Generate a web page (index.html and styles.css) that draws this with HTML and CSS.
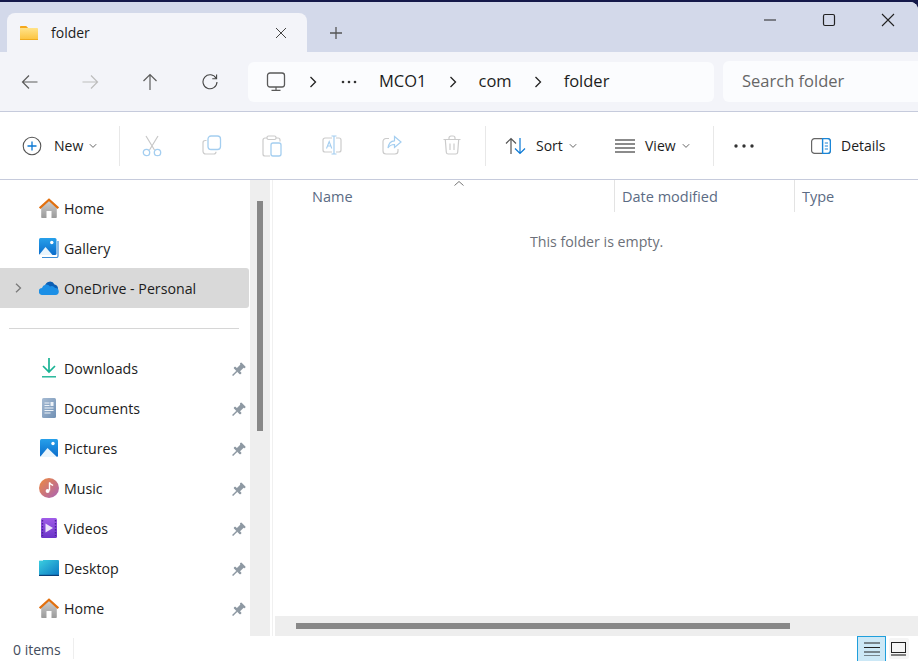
FILE: index.html
```html
<!DOCTYPE html>
<html lang="en">
<head>
  <meta charset="UTF-8" />
  <title>folder - File Explorer</title>
  <link rel="stylesheet" href="styles.css">
</head>
<body>
<svg class="defs" width="0" height="0" aria-hidden="true">
  <defs>
    <linearGradient id="gHouse" x1="0" y1="0" x2="0" y2="1"><stop offset="0" stop-color="#d0d0d0"/><stop offset="1" stop-color="#9a9a9a"/></linearGradient>
    <linearGradient id="gBlue" x1="0" y1="0" x2="0" y2="1"><stop offset="0" stop-color="#27a0ea"/><stop offset="1" stop-color="#0a6ccb"/></linearGradient>
    <linearGradient id="gDoc" x1="0" y1="0" x2="1" y2="1"><stop offset="0" stop-color="#a6bbd3"/><stop offset="1" stop-color="#7090b4"/></linearGradient>
    <linearGradient id="gMusic" x1="0" y1="0" x2="1" y2="1"><stop offset="0" stop-color="#f08a3c"/><stop offset="1" stop-color="#a862b8"/></linearGradient>
    <linearGradient id="gVideo" x1="0" y1="0" x2="0" y2="1"><stop offset="0" stop-color="#a05ce8"/><stop offset="1" stop-color="#6a34c8"/></linearGradient>
    <linearGradient id="gDesk" x1="0" y1="0" x2="1" y2="1"><stop offset="0" stop-color="#3cd0e0"/><stop offset="1" stop-color="#0b78c4"/></linearGradient>
    <linearGradient id="gFolder" x1="0" y1="0" x2="0" y2="1"><stop offset="0" stop-color="#ffe38a"/><stop offset="1" stop-color="#fcc23c"/></linearGradient>
    <symbol id="house" viewBox="0 0 20 20">
      <path d="M2.200 9 10 2.500 17.800 9v10.200a.8.800 0 0 1-.800.800H3a.8.800 0 0 1-.800-.800z" fill="url(#gHouse)"/>
      <rect x="7.500" y="13" width="5" height="7" fill="#fff"/>
      <path d="M.7 10.200 10 1.800l9.300 8.400" fill="none" stroke="#e2700f" stroke-width="2.200"/>
    </symbol>
    <symbol id="pin" viewBox="1.500 -1.200 13.600 13.600">
      <g transform="rotate(45 7 7)" fill="#8e99a3">
        <rect x="3.800" y="-1" width="6.400" height="2" rx=".6"/>
        <rect x="4.800" y="0" width="4.400" height="6.500"/>
        <rect x="2.500" y="6" width="9" height="2.200" rx=".6"/>
        <rect x="6.300" y="8" width="1.400" height="6"/>
      </g>
    </symbol>
    <symbol id="chev" viewBox="0 0 8 6">
      <path d="M.8 1.200 4 4.400l3.200-3.200" fill="none" stroke="#666" stroke-width="1"/>
    </symbol>
    <symbol id="crumb" viewBox="0 0 8 12">
      <path d="M1.500 1 6.500 6l-5 5" fill="none" stroke="#222" stroke-width="1.300"/>
    </symbol>
  </defs>
</svg>

<div class="window">

  <!-- Barra de titulo con pestana -->
  <header class="titlebar">
    <div class="tab">
      <svg class="tab-folder" width="20" height="16" viewBox="0 0 20 16">
        <path d="M1 3V1.800C1 1.300 1.300 1 1.800 1h5.400l2 2z" fill="#f5a81c"/>
        <path d="M1 3h17.200c.5 0 .8.300.8.800v10.400c0 .5-.3.800-.8.800H1.800c-.5 0-.8-.3-.8-.8z" fill="url(#gFolder)"/>
        <rect x="1" y="14" width="18" height="1" fill="#f0ab1e"/>
      </svg>
      <span class="tab-name">folder</span>
      <svg class="tab-close" width="12" height="12" viewBox="0 0 12 12"><path d="M1 1l10 10M11 1 1 11" stroke="#444" stroke-width="1" fill="none"/></svg>
    </div>
    <svg class="tab-add" width="14" height="14" viewBox="0 0 14 14"><path d="M7 1v12M1 7h12" stroke="#555" stroke-width="1.300" fill="none"/></svg>
    <div class="win-controls">
      <svg width="14" height="14" viewBox="0 0 14 14"><path d="M1 7h12" stroke="#222" stroke-width="1" fill="none"/></svg>
      <svg width="14" height="14" viewBox="0 0 14 14"><rect x="1.500" y="1.500" width="11" height="11" rx="1.500" stroke="#222" stroke-width="1.200" fill="none"/></svg>
      <svg width="14" height="14" viewBox="0 0 14 14"><path d="M1 1l12 12M13 1 1 13" stroke="#222" stroke-width="1.100" fill="none"/></svg>
    </div>
  </header>

  <!-- Navegacion y direccion -->
  <nav class="navbar">
    <div class="nav-btn"><svg width="18" height="16" viewBox="0 0 18 16"><path d="M16.500 8H1.500M8 1.500 1.500 8 8 14.500" stroke="#5c5c5c" stroke-width="1.200" fill="none"/></svg></div>
    <div class="nav-btn"><svg width="18" height="16" viewBox="0 0 18 16"><path d="M1.500 8h15M10 1.500 16.500 8 10 14.500" stroke="#bdbdbd" stroke-width="1.200" fill="none"/></svg></div>
    <div class="nav-btn"><svg width="16" height="18" viewBox="0 0 16 18"><path d="M8 17V1.500M1.500 8 8 1.500 14.500 8" stroke="#5c5c5c" stroke-width="1.200" fill="none"/></svg></div>
    <div class="nav-btn"><svg width="16" height="17" viewBox="0 0 16 17"><path d="M14.200 5.500A7 7 0 1 0 15 9" stroke="#444" stroke-width="1.100" fill="none"/><path d="M14.600 1.500v4.300h-4.300" stroke="#444" stroke-width="1.100" fill="none"/></svg></div>
    <div class="address">
      <svg class="addr-pc" width="20" height="20" viewBox="0 0 20 20"><rect x="1.500" y="1" width="17" height="14" rx="2.500" stroke="#5a5a5a" stroke-width="1.300" fill="none"/><path d="M10 15v3M5.500 18.300h9" stroke="#5a5a5a" stroke-width="1.200" fill="none"/></svg>
      <svg class="crumb c1" width="8" height="12"><use href="#crumb"/></svg>
      <svg class="addr-dots" width="16" height="4" viewBox="0 0 16 4"><circle cx="2" cy="2" r="1.300" fill="#333"/><circle cx="8" cy="2" r="1.300" fill="#333"/><circle cx="14" cy="2" r="1.300" fill="#333"/></svg>
      <span class="addr-text">MCO1</span>
      <svg class="crumb" width="8" height="12"><use href="#crumb"/></svg>
      <span class="addr-text">com</span>
      <svg class="crumb" width="8" height="12"><use href="#crumb"/></svg>
      <span class="addr-text">folder</span>
    </div>
    <div class="search">Search folder</div>
  </nav>

  <!-- Barra de comandos -->
  <section class="toolbar">
    <div class="tool tool-new">
      <svg width="20" height="20" viewBox="0 0 20 20"><circle cx="10" cy="10" r="8.800" stroke="#555" stroke-width="1.100" fill="none"/><path d="M10 5.500v9M5.500 10h9" stroke="#0a78d4" stroke-width="1.300" fill="none"/></svg>
      <span class="tool-label">New</span>
      <svg class="tool-chev" width="8" height="6"><use href="#chev"/></svg>
    </div>
    <div class="sep"></div>
    <div class="tool-icons">
      <div class="icon-cell"><svg width="20" height="22" viewBox="0 0 20 22"><path d="M4 1l8.500 14M16 1 7.500 15" stroke="#c8c8c8" stroke-width="1.200" fill="none"/><circle cx="4.500" cy="17.500" r="3.200" stroke="#a4cef0" stroke-width="1.300" fill="none"/><circle cx="15.500" cy="17.500" r="3.200" stroke="#a4cef0" stroke-width="1.300" fill="none"/></svg></div>
      <div class="icon-cell"><svg width="20" height="20" viewBox="0 0 20 20"><path d="M4.500 5.500H3.200A2.200 2.200 0 0 0 1 7.700v8.600a2.700 2.700 0 0 0 2.700 2.700h8.100a2.200 2.200 0 0 0 2.200-2.200" stroke="#cbcbcb" stroke-width="1.200" fill="none"/><rect x="6" y="1" width="12.500" height="13.500" rx="3" stroke="#a4cef0" stroke-width="1.300" fill="none"/></svg></div>
      <div class="icon-cell"><svg width="20" height="22" viewBox="0 0 20 22"><path d="M5 3H3a2 2 0 0 0-2 2v14a2 2 0 0 0 2 2h5M14 3h2a2 2 0 0 1 2 2v1.500" stroke="#cbcbcb" stroke-width="1.200" fill="none"/><rect x="5" y="1" width="9" height="3.500" rx="1.500" stroke="#cbcbcb" stroke-width="1.200" fill="none"/><rect x="9" y="8" width="10" height="13" rx="2" stroke="#a4cef0" stroke-width="1.300" fill="none"/></svg></div>
      <div class="icon-cell"><svg width="20" height="20" viewBox="0 0 20 20"><path d="M10 3H3a2 2 0 0 0-2 2v10a2 2 0 0 0 2 2h7M14 3h3a2 2 0 0 1 2 2v10a2 2 0 0 1-2 2h-3" stroke="#cbcbcb" stroke-width="1.200" fill="none"/><path d="M9.500 1h5M12 1v18M9.500 19h5" stroke="#a4cef0" stroke-width="1.200" fill="none"/><path d="M4.500 13.500 7.200 6.500 9.800 13.500M5.500 11h3.500" stroke="#a4cef0" stroke-width="1.100" fill="none"/></svg></div>
      <div class="icon-cell"><svg width="20" height="20" viewBox="0 0 20 20"><path d="M7 3.500H4A3 3 0 0 0 1 6.500v9.500a3 3 0 0 0 3 3h9a3 3 0 0 0 3-3v-2" stroke="#cbcbcb" stroke-width="1.200" fill="none"/><path d="M12.500 1.500 19 7l-6.500 5.500V9.500c-3 0-5 1-6.500 3.500 .5-4 2.500-7 6.500-7.200z" stroke="#a4cef0" stroke-width="1.200" fill="none"/></svg></div>
      <div class="icon-cell"><svg width="18" height="20" viewBox="0 0 18 20"><path d="M.5 4.500h17M6 4.500V3a2 2 0 0 1 2-2h2a2 2 0 0 1 2 2v1.500M2.300 4.500l1 12.700a2 2 0 0 0 2 1.800h7.400a2 2 0 0 0 2-1.800l1-12.700M7 8.500v6.500M11 8.500v6.500" stroke="#cbcbcb" stroke-width="1.200" fill="none"/></svg></div>
    </div>
    <div class="sep sep-b"></div>
    <div class="tool tool-sort">
      <svg width="21" height="18" viewBox="0 0 21 18"><path d="M6 17V1.500M1 6.500l5-5 5 5" stroke="#555" stroke-width="1.200" fill="none"/><path d="M15 1v15.500M10 11.500l5 5 5-5" stroke="#0a78d4" stroke-width="1.200" fill="none"/></svg>
      <span class="tool-label">Sort</span>
      <svg class="tool-chev" width="8" height="6"><use href="#chev"/></svg>
    </div>
    <div class="tool tool-view">
      <svg width="20" height="14" viewBox="0 0 20 14"><path d="M0 1h20M0 5h20M0 9h20M0 13h20" stroke="#666" stroke-width="1.300" fill="none"/></svg>
      <span class="tool-label">View</span>
      <svg class="tool-chev" width="8" height="6"><use href="#chev"/></svg>
    </div>
    <div class="sep"></div>
    <svg class="tool-more" width="20" height="4" viewBox="0 0 20 4"><circle cx="2" cy="2" r="1.700" fill="#333"/><circle cx="10" cy="2" r="1.700" fill="#333"/><circle cx="18" cy="2" r="1.700" fill="#333"/></svg>
    <div class="tool tool-details">
      <svg width="20" height="16" viewBox="0 0 20 16"><rect x=".6" y=".6" width="18.800" height="14.800" rx="3" stroke="#666" stroke-width="1.200" fill="none"/><path d="M11.600.6h4.800a3 3 0 0 1 3 3v8.800a3 3 0 0 1-3 3h-4.800z" fill="#fff" stroke="#1a86d8" stroke-width="1.400"/><path d="M13.800 5h3.200M13.800 8h3.200M13.800 11h3.200" stroke="#1a86d8" stroke-width="1.100" fill="none"/></svg>
      <span class="tool-label">Details</span>
    </div>
  </section>

  <div class="main">

    <!-- Panel de navegacion -->
    <aside class="sidebar">
      <div class="side-row">
        <svg class="side-icon" width="20" height="20"><use href="#house"/></svg>
        <span>Home</span>
      </div>
      <div class="side-row">
        <svg class="side-icon" width="20" height="20" viewBox="0 0 20 20"><rect x="0" y="0" width="17.500" height="17" rx="1.500" fill="url(#gBlue)"/><path d="M0 17l6.500-8 7 8z" fill="#e9f5fd"/><circle cx="12.800" cy="4.500" r="1.700" fill="#fff"/><path d="M19 3v15a1.500 1.500 0 0 1-1.500 1.500H3" fill="none" stroke="#3d8ed6" stroke-width="1.200"/></svg>
        <span>Gallery</span>
      </div>
      <div class="side-row is-active">
        <svg class="side-arrow" width="7" height="10" viewBox="0 0 7 10"><path d="M1 .8 5.500 5 1 9.200" fill="none" stroke="#7a7a7a" stroke-width="1.300"/></svg>
        <svg class="side-icon" width="20" height="14" viewBox="0 0 20 14"><path d="M6 5a5 5 0 0 1 9.500-1.500A4 4 0 0 1 19 8H8z" fill="#0c5fb4"/><path d="M3.500 14A3.500 3.500 0 0 1 3 7a4.500 4.500 0 0 1 8-1.500 3.500 3.500 0 0 1 5 1.500 3.200 3.200 0 0 1 .5 7z" fill="#1b8fe6"/></svg>
        <span>OneDrive - Personal</span>
      </div>
      <div class="side-divider"></div>
      <div class="side-row">
        <svg class="side-icon" width="20" height="20" viewBox="0 0 20 20"><path d="M10 0v13.500M4 8l6 6 6-6" fill="none" stroke="#19b394" stroke-width="1.700"/><path d="M3 18.800h14" stroke="#19b394" stroke-width="1.400"/></svg>
        <span>Downloads</span>
        <svg class="pin" width="14" height="14"><use href="#pin"/></svg>
      </div>
      <div class="side-row">
        <svg class="side-icon" width="14" height="20" viewBox="0 0 14 20"><rect width="14" height="20" rx="1.500" fill="url(#gDoc)"/><path d="M2.500 5h5M2.500 7.500h5M2.500 10h9M2.500 12.500h9M2.500 15h6" stroke="#eef3f8" stroke-width="1"/><rect x="8.500" y="4" width="3" height="4" fill="#eef3f8"/></svg>
        <span>Documents</span>
        <svg class="pin" width="14" height="14"><use href="#pin"/></svg>
      </div>
      <div class="side-row">
        <svg class="side-icon" width="18" height="18" viewBox="0 0 18 18"><rect width="18" height="18" rx="1.500" fill="url(#gBlue)"/><path d="M0 18 7.500 9 17 18z" fill="#eaf5fc"/><circle cx="13" cy="4.500" r="1.700" fill="#fff"/></svg>
        <span>Pictures</span>
        <svg class="pin" width="14" height="14"><use href="#pin"/></svg>
      </div>
      <div class="side-row">
        <svg class="side-icon" width="20" height="20" viewBox="0 0 20 20"><circle cx="10" cy="10" r="10" fill="url(#gMusic)"/><path d="M10.500 4.500v8" stroke="#fff" stroke-width="1.400"/><path d="M10.500 4.500c.5 2 2.500 2 3.500 3" stroke="#fff" stroke-width="1.300" fill="none"/><circle cx="8.600" cy="13" r="2" fill="#fff"/></svg>
        <span>Music</span>
        <svg class="pin" width="14" height="14"><use href="#pin"/></svg>
      </div>
      <div class="side-row">
        <svg class="side-icon" width="16" height="20" viewBox="0 0 16 20"><rect width="16" height="20" rx="1.500" fill="url(#gVideo)"/><path d="M4.500 5.500 12 10l-7.500 4.500z" fill="#ece2fb"/><path d="M1.500 2v16M14.500 2v16" stroke="#4a2398" stroke-width="1.400" stroke-dasharray="1.500 1.500"/></svg>
        <span>Videos</span>
        <svg class="pin" width="14" height="14"><use href="#pin"/></svg>
      </div>
      <div class="side-row">
        <svg class="side-icon" width="20" height="16" viewBox="0 0 20 16"><rect width="20" height="15.500" rx="1" fill="url(#gDesk)"/><rect y="14.800" width="20" height="1.200" fill="#0a3f78"/><rect x="0" y="0" width="4" height="1" fill="#fff" opacity=".6"/></svg>
        <span>Desktop</span>
        <svg class="pin" width="14" height="14"><use href="#pin"/></svg>
      </div>
      <div class="side-row">
        <svg class="side-icon" width="20" height="20"><use href="#house"/></svg>
        <span>Home</span>
        <svg class="pin" width="14" height="14"><use href="#pin"/></svg>
      </div>
    </aside>

    <div class="v-scroll"><div class="v-thumb"></div></div>

    <!-- Lista de archivos -->
    <section class="files">
      <div class="col-heads">
        <div class="col col-name">Name<svg class="sort-caret" width="10" height="5" viewBox="0 0 10 5"><path d="M.5 4.500 5 .5l4.500 4" fill="none" stroke="#777" stroke-width="1"/></svg></div>
        <div class="col col-date">Date modified</div>
        <div class="col col-type">Type</div>
      </div>
      <p class="empty">This folder is empty.</p>
      <div class="h-scroll"><div class="h-thumb"></div></div>
    </section>
  </div>

  <!-- Barra de estado -->
  <footer class="statusbar">
    <span class="item-count">0 items</span>
    <div class="view-btn is-on"><svg width="16" height="14" viewBox="0 0 16 14"><path d="M0 1h16M0 5.500h16M0 10h16M0 14h16" stroke="#222" stroke-width="1.100" fill="none"/></svg></div>
    <div class="view-btn"><svg width="16" height="14" viewBox="0 0 16 14"><rect x=".5" y=".5" width="14" height="10" stroke="#222" fill="none"/><path d="M0 13h15" stroke="#222" stroke-width="1.100"/></svg></div>
  </footer>
</div>
</body>
</html>
```

FILE: styles.css
```css
* {
  box-sizing: border-box;
}

html, body {
  height: 100%;
}

body {
  margin: 0;
  background-color: #14194a;
  overflow: hidden;
  font-family: 'Open Sans', 'Noto Sans', sans-serif;
  color: #1c1c1c;
}

svg {
  display: block;
  flex: none;
}

.defs {
  position: absolute;
}

.window {
  margin-top: 2px;
  height: 659px;
  display: flex;
  flex-direction: column;
  background-color: #fff;
  border-top-right-radius: 8px;
  overflow: hidden;
}

/* Barra de titulo */
.titlebar {
  height: 50px;
  flex: none;
  display: flex;
  align-items: flex-end;
  padding-left: 7px;
  background-color: #d3d9ea;
}

.tab {
  width: 300px;
  height: 39px;
  display: flex;
  align-items: center;
  padding: 0 20px 0 12px;
  background-color: #f3f4f9;
  border-radius: 8px 8px 0 0;
}

.tab-name {
  margin-left: 12px;
  font-size: 14px;
  flex: 1;
}

.tab-add {
  margin: 0 0 12px 22px;
}

.win-controls {
  margin-left: auto;
  align-self: flex-start;
  margin-top: 11px;
  padding-right: 23px;
  display: flex;
  gap: 45px;
}

/* Navegacion */
.navbar {
  height: 60px;
  flex: none;
  display: flex;
  align-items: center;
  background-color: #f3f4f9;
  border-bottom: 1px solid #c6cbdc;
}

.nav-btn {
  width: 60px;
  flex: none;
  display: flex;
  justify-content: center;
}

.address {
  width: 466px;
  height: 40px;
  flex: none;
  margin-left: 8px;
  display: flex;
  align-items: center;
  padding-left: 18px;
  background-color: #fbfcfe;
  border-radius: 6px;
}

.addr-text {
  font-size: 16.5px;
  margin: 0 22px;
  padding-bottom: 2px;
}

.c1 {
  margin-left: 23px;
}

.addr-dots {
  margin-left: 24px;
}

.search {
  width: 220px;
  height: 41px;
  flex: none;
  margin-left: 9px;
  padding: 0 0 2px 19px;
  display: flex;
  align-items: center;
  background-color: #fbfcfe;
  border-radius: 6px;
  font-size: 16.5px;
  color: #666;
}

/* Barra de comandos */
.toolbar {
  height: 68px;
  flex: none;
  display: flex;
  align-items: center;
  background-color: #fff;
  border-bottom: 1px solid #c6cbdc;
}

.tool {
  display: flex;
  align-items: center;
}

.tool-label {
  font-size: 14px;
}

.tool-chev {
  margin-left: 6px;
}

.tool-new {
  width: 119px;
  padding-left: 22px;
}

.tool-new .tool-label {
  margin-left: 12px;
}

.sep {
  width: 1px;
  height: 40px;
  background-color: #e8e8e8;
}

.sep-b {
  margin-left: 3px;
}

.tool-icons {
  margin-left: 2px;
  display: flex;
}

.icon-cell {
  width: 60px;
  display: flex;
  justify-content: center;
}

.tool-sort {
  width: 110px;
  padding-left: 19px;
}

.tool-sort .tool-label,
.tool-view .tool-label {
  margin-left: 10px;
}

.tool-view {
  width: 117px;
  padding-left: 19px;
}

.tool-more {
  margin-left: 20px;
}

.tool-details {
  margin-left: 57px;
}

.tool-details .tool-label {
  margin-left: 10px;
}

/* Contenido */
.main {
  flex: 1;
  min-height: 0;
  display: flex;
}

.sidebar {
  width: 250px;
  flex: none;
  padding-top: 8px;
}

.side-row {
  height: 40px;
  display: flex;
  align-items: center;
  position: relative;
  font-size: 14.2px;
  padding-left: 64px;
}

.side-icon {
  position: absolute;
  left: 49px;
  top: 50%;
  transform: translate(-50%, -50%);
}

.side-arrow {
  position: absolute;
  left: 15px;
  top: 15px;
}

.is-active {
  margin-right: 1px;
  background-color: #d9d9d9;
  border-radius: 0 3px 3px 0;
}

.pin {
  position: absolute;
  left: 232px;
  top: 14px;
}

.side-divider {
  height: 1px;
  margin: 20px 11px 19px 9px;
  background-color: #d6d6d6;
}

.v-scroll {
  width: 20px;
  flex: none;
  padding-top: 21px;
  display: flex;
  justify-content: center;
  background-color: #eee;
}

.v-thumb {
  width: 6px;
  height: 230px;
  background-color: #888;
}

.files {
  flex: 1;
  min-width: 0;
  margin-left: 2px;
  display: flex;
  flex-direction: column;
  border-left: 1px solid #f0f0f0;
  position: relative;
}

.col-heads {
  height: 32px;
  flex: none;
  display: flex;
  margin-left: 2px;
}

.col {
  font-size: 14.5px;
  color: #5b6b84;
  padding-top: 7px;
  border-right: 1px solid #e3e3e3;
}

.col-name {
  width: 340px;
  padding-left: 37px;
  position: relative;
}

.sort-caret {
  position: absolute;
  left: 179px;
  top: 1px;
}

.col-date {
  width: 180px;
  padding-left: 7px;
}

.col-type {
  flex: 1;
  padding-left: 7px;
  border-right: none;
}

.empty {
  flex: 1;
  margin: 20px 0 0;
  padding-left: 257px;
  font-size: 14.2px;
  color: #6c7079;
}

.h-scroll {
  height: 20px;
  flex: none;
  margin-left: 2px;
  padding: 7px 0 0 21px;
  background-color: #eee;
}

.h-thumb {
  width: 494px;
  height: 6px;
  background-color: #888;
}

/* Barra de estado */
.statusbar {
  height: 25px;
  flex: none;
  display: flex;
  align-items: center;
  background-color: #fff;
}

.item-count {
  width: 61px;
  margin-left: 13px;
  padding-top: 2px;
  font-size: 14px;
  color: #444c5c;
  border-right: 1px solid #eee;
}

.view-btn {
  width: 20px;
  height: 21px;
  display: flex;
  align-items: center;
  justify-content: center;
  background-color: #f5f5f5;
  border-radius: 2px;
  margin-left: 3px;
}

.view-btn.is-on {
  width: 29px;
  height: 25px;
  margin-left: auto;
  background-color: #cce8f6;
  border: 1px solid #1f9fdc;
  border-bottom: none;
  border-radius: 0;
}

.view-btn:last-child {
  margin-right: 9px;
}
```
